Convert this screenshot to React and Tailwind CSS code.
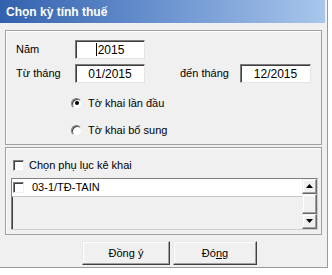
import React from 'react';

const font = { fontFamily: '"Liberation Sans", Arial, sans-serif' };

const TextBox = ({ value, caret, className = '' }) => (
    <div className={`relative h-[19px] bg-white border border-t-[#7a7a7a] border-l-[#7a7a7a] border-r-[#e4e4e4] border-b-[#e4e4e4] shadow-[inset_1px_1px_0_#404040] flex items-center justify-center text-[12px] text-black ${className}`}>
        {caret && <span className="w-px h-[13px] bg-black mr-[1px]"></span>}
        <span>{value}</span>
    </div>
);

const Radio = ({ checked, label }) => (
    <div className="flex items-center h-[14px]">
        <span className="w-[11px] h-[11px] rounded-full bg-white border border-t-[#808080] border-l-[#808080] border-r-[#f0f0f0] border-b-[#f0f0f0] shadow-[inset_1px_1px_0_#404040] flex items-center justify-center">
            {checked && <span className="w-[4px] h-[4px] rounded-full bg-black"></span>}
        </span>
        <span className="ml-[6px] text-[11px] text-black">{label}</span>
    </div>
);

const Check = () => (
    <span className="w-[11px] h-[11px] bg-white border border-t-[#808080] border-l-[#808080] border-r-[#f0f0f0] border-b-[#f0f0f0] shadow-[inset_1px_1px_0_#404040] shrink-0"></span>
);

const Button = ({ children, className = '' }) => (
    <button className={`h-[24px] bg-[#f0f0f0] border border-t-[#e8e8e8] border-l-[#e8e8e8] border-r-[#404040] border-b-[#404040] shadow-[inset_-1px_-1px_0_#a0a0a0,inset_1px_1px_0_#ffffff] text-[11px] text-black flex items-center justify-center ${className}`}>
        {children}
    </button>
);

export default function App() {
    return (
        <div className="w-[332px] h-[275px] bg-white overflow-hidden" style={font}>
            <div className="w-[328px] h-[268px] bg-[#f0f0f0] border-r border-b border-[#9a9a9a] flex flex-col">
                {/* Title bar */}
                <div className="h-[23px] w-[325px] bg-gradient-to-r from-[#3261ad] via-[#6b93cf] to-[#a9c6eb] flex items-center pl-[6px] shrink-0">
                    <span className="text-white font-bold text-[12px]">Chọn kỳ tính thuế</span>
                </div>

                <div className="pl-[5px] pr-[5px] pt-[7px] flex flex-col">
                    {/* Group 1 */}
                    <div className="h-[115px] border border-[#a0a0a0] shadow-[inset_1px_1px_0_#ffffff] pl-[10px] pt-[9px] flex flex-col">
                        <div className="flex items-center">
                            <span className="w-[59px] text-[11px] text-black">Năm</span>
                            <TextBox value="2015" caret className="w-[70px]" />
                        </div>
                        <div className="flex items-center mt-[5px]">
                            <span className="w-[59px] text-[11px] text-black">Từ tháng</span>
                            <TextBox value="01/2015" className="w-[70px]" />
                            <span className="ml-[35px] w-[60px] text-[11px] text-black">đến tháng</span>
                            <TextBox value="12/2015" className="w-[71px]" />
                        </div>
                        <div className="ml-[55px] mt-[13px] flex flex-col gap-[13px]">
                            <Radio checked label="Tờ khai lần đầu" />
                            <Radio label="Tờ khai bổ sung" />
                        </div>
                    </div>

                    {/* Group 2 */}
                    <div className="mt-[2px] h-[88px] border border-[#a0a0a0] shadow-[inset_1px_1px_0_#ffffff] pt-[9px] flex flex-col">
                        <div className="flex items-center pl-[7px]">
                            <Check />
                            <span className="ml-[5px] text-[11px] text-black">Chọn phụ lục kê khai</span>
                        </div>
                        <div className="mt-[4px] ml-[5px] w-[307px] h-[52px] border border-t-[#808080] border-l-[#808080] border-r-[#d0d0d0] border-b-[#d0d0d0] shadow-[inset_1px_1px_0_#404040] flex">
                            <div className="flex-1 flex flex-col">
                                <div className="h-[18px] bg-white border-b border-[#c8c8c8] flex items-center pl-[1px]">
                                    <Check />
                                    <span className="ml-[8px] text-[11px] text-black">03-1/TĐ-TAIN</span>
                                </div>
                            </div>
                            <div className="w-[15px] flex flex-col bg-[#f0f0f0]">
                                <div className="h-[15px] border border-t-[#f0f0f0] border-l-[#f0f0f0] border-r-[#696969] border-b-[#696969] shadow-[inset_-1px_-1px_0_#a0a0a0,inset_1px_1px_0_#fff] flex items-center justify-center">
                                    <svg width="7" height="4" viewBox="0 0 7 4"><path d="M3.5 0 L7 4 L0 4 Z" fill="#000" /></svg>
                                </div>
                                <div className="flex-1 border border-t-[#f0f0f0] border-l-[#f0f0f0] border-r-[#696969] border-b-[#696969] shadow-[inset_-1px_-1px_0_#a0a0a0,inset_1px_1px_0_#fff]"></div>
                                <div className="h-[15px] border border-t-[#f0f0f0] border-l-[#f0f0f0] border-r-[#696969] border-b-[#696969] shadow-[inset_-1px_-1px_0_#a0a0a0,inset_1px_1px_0_#fff] flex items-center justify-center">
                                    <svg width="7" height="4" viewBox="0 0 7 4"><path d="M0 0 L7 0 L3.5 4 Z" fill="#000" /></svg>
                                </div>
                            </div>
                        </div>
                    </div>

                    {/* Buttons */}
                    <div className="mt-[6px] flex pl-[77px] gap-[3px]">
                        <Button className="w-[88px]">Đồng ý</Button>
                        <Button className="w-[84px]">Đó<span className="underline">ng</span></Button>
                    </div>
                </div>
            </div>
        </div>
    );
}
